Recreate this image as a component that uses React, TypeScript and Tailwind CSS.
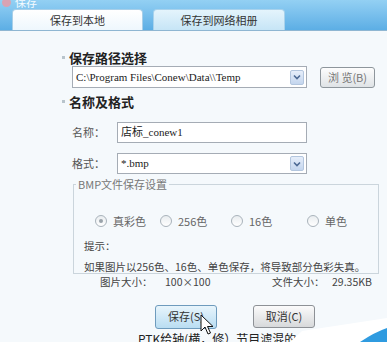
import React from 'react';

const cjk = { fontFamily: '"Noto Sans CJK SC", "Noto Sans", sans-serif' };
const song = { fontFamily: '"Liberation Serif", "Noto Sans CJK SC", serif' };

function Bullet() {
  return <span className="inline-block w-[3px] h-[3px] bg-[#b8c4cc] mr-[4px]" />;
}

function DropArrow() {
  return (
    <span className="ml-auto mr-[2px] flex h-[15px] w-[14px] items-center justify-center rounded-[2px] border border-[#b3c6de] bg-gradient-to-b from-[#e6eefa] to-[#c4d6ee]">
      <svg width="8" height="6" viewBox="0 0 8 6">
        <path d="M1 1.5 L4 4.5 L7 1.5" fill="none" stroke="#4d6a94" strokeWidth="1.6" />
      </svg>
    </span>
  );
}

function Radio({ label, checked, className }: { label: string; checked?: boolean; className: string }) {
  return (
    <div className={`flex items-center ${className}`}>
      <span className="flex h-[12px] w-[12px] items-center justify-center rounded-full border border-[#a9b3bb] bg-gradient-to-b from-[#e9edf0] to-white">
        {checked && <span className="h-[4px] w-[4px] rounded-full bg-[#9aa3aa]" />}
      </span>
      <span className="ml-[6px] text-[11px] text-[#666]">{label}</span>
    </div>
  );
}

export default function App() {
  return (
    <div className="relative h-[342px] w-[387px] overflow-hidden bg-[#f5f9fc]" style={cjk}>
      {/* 顶部标题 + 标签页 */}
      <div className="relative h-[31px] border-b border-[#8fb6d2] bg-gradient-to-b from-[#93d0f3] to-[#5caee5]">
        <div className="absolute left-[2px] top-[-6px] flex items-center">
          <span className="h-[9px] w-[9px] rounded-full bg-[#d9a3b3]" />
          <span className="ml-[4px] text-[11px] text-[#f4fbff]">保存</span>
        </div>
        <div className="flex h-full items-end pl-[12px]">
          <div className="flex h-[21px] w-[131px] items-center justify-center rounded-t-[4px] border border-b-0 border-[#a8cfe8] bg-gradient-to-b from-white to-[#eef7fd] text-[11px] text-[#333]">
            保存到本地
          </div>
          <div className="ml-[10px] flex h-[21px] w-[132px] items-center justify-center rounded-t-[4px] border border-b-0 border-[#a8d2ec] bg-gradient-to-b from-[#e4f4fc] to-[#c6e5f6] text-[11px] text-[#333]">
            保存到网络相册
          </div>
        </div>
      </div>

      {/* 保存路径选择 */}
      <div className="ml-[62px] mt-[20px] flex items-center">
        <Bullet />
        <span className="text-[13px] font-bold leading-[13px] text-[#222]">保存路径选择</span>
      </div>
      <div className="ml-[72px] mt-[2px] flex items-center">
        <div className="flex h-[22px] w-[235px] items-center border border-[#a5acb5] bg-white pl-[3px]">
          <span className="text-[11px] text-[#222]" style={song}>C:\Program Files\Conew\Data\\Temp</span>
          <DropArrow />
        </div>
        <button className="ml-[13px] flex h-[21px] w-[55px] items-center justify-center rounded-[3px] border border-[#8e969c] bg-gradient-to-b from-[#fdfdfd] to-[#dfe3e6] text-[11px] text-[#777]">
          浏 览(B)
        </button>
      </div>

      {/* 名称及格式 */}
      <div className="ml-[62px] mt-[7px] flex items-center">
        <Bullet />
        <span className="text-[13px] font-bold leading-[13px] text-[#222]">名称及格式</span>
      </div>
      <div className="ml-[72px] mt-[14px] flex items-center">
        <span className="w-[45px] text-[11px] text-[#555]">名称：</span>
        <div className="flex h-[21px] w-[190px] items-center border border-[#a5acb5] bg-white pl-[3px] text-[11px] text-[#222]" style={song}>
          店标_conew1
        </div>
      </div>
      <div className="ml-[72px] mt-[10px] flex items-center">
        <span className="w-[45px] text-[11px] text-[#555]">格式：</span>
        <div className="flex h-[21px] w-[190px] items-center border border-[#a5acb5] bg-white pl-[3px]">
          <span className="text-[11px] text-[#222]" style={song}>*.bmp</span>
          <DropArrow />
        </div>
      </div>

      {/* BMP 设置 */}
      <fieldset className="ml-[73px] mt-[4px] w-[306px] border border-[#cbd5dc] px-[10px]">
        <legend className="ml-[-8px] px-[2px] text-[11px] leading-[12px] text-[#777]">BMP文件保存设置</legend>
        <div className="mt-[23px] flex items-center">
          <Radio label="真彩色" checked className="ml-[11px] w-[65px]" />
          <Radio label="256色" className="w-[71px]" />
          <Radio label="16色" className="w-[76px]" />
          <Radio label="单色" className="" />
        </div>
        <div className="mt-[6px] text-[10.5px] text-[#444]">
          <div className="leading-[19px]">提示：</div>
          <div className="mt-[6px] whitespace-nowrap leading-[12px]">如果图片以256色、16色、单色保存，将导致部分色彩失真。</div>
        </div>
      </fieldset>

      {/* 大小信息 */}
      <div className="ml-[100px] mt-[1px] flex items-center whitespace-nowrap text-[10.5px] leading-[14px] text-[#444]">
        <span className="w-[65px] shrink-0">图片大小：</span>
        <span className="w-[107px] shrink-0">100×100</span>
        <span className="w-[60px] shrink-0">文件大小：</span>
        <span className="shrink-0">29.35KB</span>
      </div>

      {/* 按钮 */}
      <div className="ml-[155px] mt-[16px] flex items-start">
        <button className="flex h-[24px] w-[62px] items-center justify-center rounded-[3px] border border-[#6e9bbd] bg-gradient-to-b from-[#e8f5fc] to-[#b9ddf2] text-[11px] text-[#333]">
          保存(S)
        </button>
        <button className="ml-[36px] flex h-[23px] w-[62px] items-center justify-center rounded-[3px] border border-[#8d9196] bg-gradient-to-b from-[#fbfbfb] to-[#d7d9db] text-[11px] text-[#333]">
          取消(C)
        </button>
      </div>
      <div className="ml-[138px] mt-[3px] whitespace-nowrap text-[12px] leading-[14px] text-[#222]">PTK给轴(横，修）节目滤混的会此</div>

      {/* 鼠标指针 */}
      <svg className="absolute left-[200px] top-[314px]" width="14" height="22" viewBox="0 0 14 22">
        <path d="M1 1 L1 17 L5 13 L8 20 L10.5 19 L7.5 12.5 L13 12.5 Z" fill="#fff" stroke="#111" strokeWidth="1" />
      </svg>

      {/* 右下角装饰 */}
      <svg className="absolute left-[290px] top-[318px]" width="97" height="24" viewBox="0 0 97 24">
        <path d="M12 13 L97 0 L97 24 L0 24 Z" fill="#ffffff" />
        <path d="M70 24 Q85 14 97 10 L97 24 Z" fill="#2f9be0" />
      </svg>
    </div>
  );
}
